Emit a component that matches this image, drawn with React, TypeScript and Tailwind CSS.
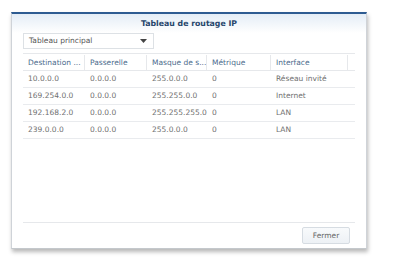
const routes = [
  { dest: '10.0.0.0', gw: '0.0.0.0', mask: '255.0.0.0', metric: '0', iface: 'Réseau invité' },
  { dest: '169.254.0.0', gw: '0.0.0.0', mask: '255.255.0.0', metric: '0', iface: 'Internet' },
  { dest: '192.168.2.0', gw: '0.0.0.0', mask: '255.255.255.0', metric: '0', iface: 'LAN' },
  { dest: '239.0.0.0', gw: '0.0.0.0', mask: '255.0.0.0', metric: '0', iface: 'LAN' },
]

const cols = 'grid grid-cols-[62px_62px_60px_64px_77px_8px]'
const cell = 'flex items-center pl-[5px] whitespace-nowrap overflow-hidden'

export default function App() {
  return (
    <div className="w-[400px] h-[262px] bg-white pt-[12px] pl-[11px] font-['DejaVu_Sans',sans-serif]">
      <div className="w-[356px] h-[237px] flex flex-col border-t-2 border-t-[#2d5b91] border-x border-b border-x-[#cfd3d8] border-b-[#c4c8cc] shadow-[1px_3px_4px_rgba(0,0,0,0.28)] bg-white">
        <div className="h-[19px] pt-[1px] flex items-center justify-center bg-gradient-to-b from-[#e4edf6] to-white text-[7.8px] font-bold text-[#27466c]">
          Tableau de routage IP
        </div>
        <div className="flex-1 flex flex-col px-[11px]">
          <div className="w-[131px] h-[16px] border border-[#dde1e5] flex items-center justify-between pl-[5px] pr-[6px] text-[7.5px] text-[#555]">
            <span>Tableau principal</span>
            <svg width="7" height="4" viewBox="0 0 7 4">
              <path d="M0 0h7L3.5 4z" fill="#444" />
            </svg>
          </div>
          <div className="mt-[4px] text-[7.5px]">
            <div className={`${cols} h-[18px] pt-[1px] border-t border-b border-[#e6e8eb] text-[#4c6b8c]`}>
              <div className={`${cell} border-r border-[#e6e8eb]`}>Destination ...</div>
              <div className={`${cell} border-r border-[#e6e8eb]`}>Passerelle</div>
              <div className={`${cell} border-r border-[#e6e8eb]`}>Masque de s...</div>
              <div className={`${cell} border-r border-[#e6e8eb]`}>Métrique</div>
              <div className={`${cell} border-r border-[#e6e8eb]`}>Interface</div>
              <div />
            </div>
            {routes.map((r) => (
              <div key={r.dest} className={`${cols} h-[17px] border-b border-[#e9ebee] text-[#707070]`}>
                <div className={cell}>{r.dest}</div>
                <div className={cell}>{r.gw}</div>
                <div className={cell}>{r.mask}</div>
                <div className={cell}>{r.metric}</div>
                <div className={cell}>{r.iface}</div>
                <div />
              </div>
            ))}
          </div>
          <div className="flex-1" />
          <div className="border-t border-[#e6e8eb] h-[26px] flex items-center justify-end pr-[5px]">
            <button className="w-[48px] h-[17px] border border-[#d6dce2] rounded-[2px] bg-gradient-to-b from-[#f8fafc] to-[#edf1f5] text-[7.5px] text-[#666]">
              Fermer
            </button>
          </div>
        </div>
      </div>
    </div>
  )
}
